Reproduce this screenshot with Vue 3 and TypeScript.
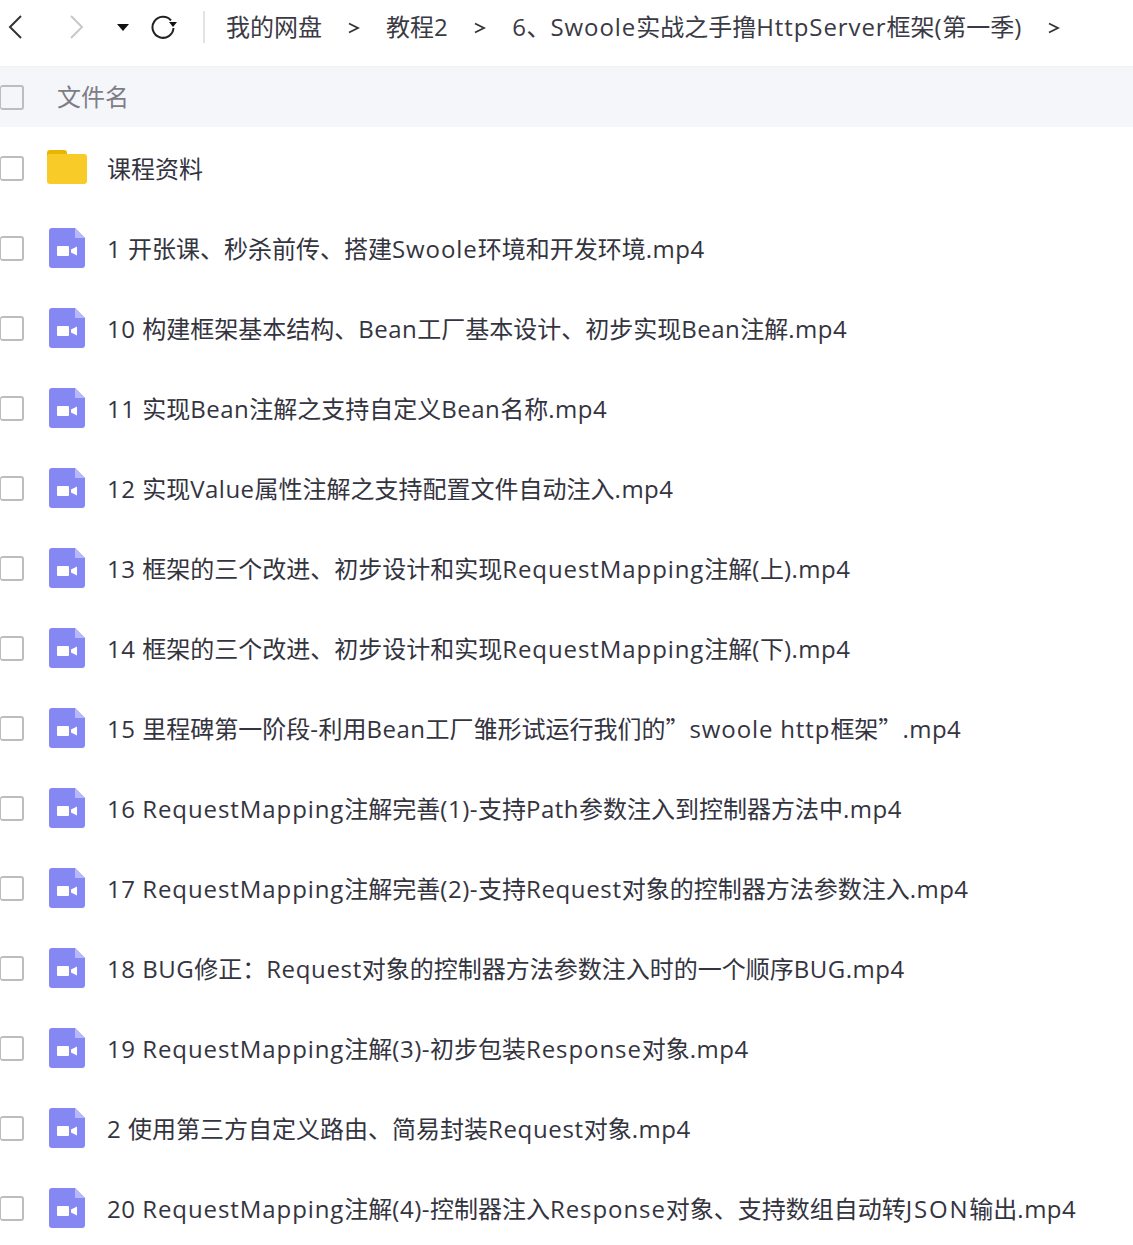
<script setup lang="ts">
interface Run {
  text: string
  kind: 'cjk' | 'base' | 'mid' | 'wide' | 'xwide'
}

const WIDE = /^(Swoole|swoole|RequestMapping|Response|HttpServer|http)$/

function splitRuns(text: string): Run[] {
  const parts = text.match(/Swoole|swoole|RequestMapping|Request|Response|JSON|HttpServer|http|[\x00-\x7f]|[^\x00-\x7f]+/g) ?? []
  const runs: Run[] = []
  for (const part of parts) {
    let kind: Run['kind'] = 'base'
    if (/[^\x00-\x7f]/.test(part)) kind = 'cjk'
    else if (WIDE.test(part)) kind = 'wide'
    else if (part === 'Request') kind = 'mid'
    else if (part === 'JSON') kind = 'xwide'
    const last = runs[runs.length - 1]
    if (last && last.kind === kind) last.text += part
    else runs.push({ text: part, kind })
  }
  return runs
}

const crumbs = ['我的网盘', '教程2', '6、Swoole实战之手撸HttpServer框架(第一季)'].map(splitRuns)
const files: Run[][] = [
  '1 开张课、秒杀前传、搭建Swoole环境和开发环境.mp4',
  '10 构建框架基本结构、Bean工厂基本设计、初步实现Bean注解.mp4',
  '11 实现Bean注解之支持自定义Bean名称.mp4',
  '12 实现Value属性注解之支持配置文件自动注入.mp4',
  '13 框架的三个改进、初步设计和实现RequestMapping注解(上).mp4',
  '14 框架的三个改进、初步设计和实现RequestMapping注解(下).mp4',
  '15 里程碑第一阶段-利用Bean工厂雏形试运行我们的”swoole http框架”.mp4',
  '16 RequestMapping注解完善(1)-支持Path参数注入到控制器方法中.mp4',
  '17 RequestMapping注解完善(2)-支持Request对象的控制器方法参数注入.mp4',
  '18 BUG修正：Request对象的控制器方法参数注入时的一个顺序BUG.mp4',
  '19 RequestMapping注解(3)-初步包装Response对象.mp4',
  '2 使用第三方自定义路由、简易封装Request对象.mp4',
  '20 RequestMapping注解(4)-控制器注入Response对象、支持数组自动转JSON输出.mp4',
].map(splitRuns)
</script>

<template>
  <div class="page">
    <header class="toolbar">
      <div class="nav">
        <svg class="back" width="16" height="26" viewBox="0 0 16 26"><path d="M14 2 3 13l11 11" fill="none" stroke="#333" stroke-width="2"/></svg>
        <svg class="forward" width="16" height="26" viewBox="0 0 16 26"><path d="M2 2l11 11L2 24" fill="none" stroke="#c8c8c8" stroke-width="2"/></svg>
        <svg class="caret" width="12" height="8" viewBox="0 0 12 8"><path d="M0 1h12L6 8z" fill="#111"/></svg>
        <svg class="refresh" width="28" height="26" viewBox="0 0 28 26"><path d="M20 6.500A10.500 10.500 0 1 0 22.500 14" fill="none" stroke="#222" stroke-width="2"/><path d="M18 8h8l-4 5z" fill="#111"/></svg>
        <span class="divider"></span>
      </div>
      <nav class="crumbs">
        <template v-for="(c, i) in crumbs" :key="i">
          <span class="crumb"><span v-for="(r, j) in c" :key="j" :class="r.kind">{{ r.text }}</span></span>
          <svg class="chev" width="12" height="12" viewBox="0 0 12 12"><path d="M1 1.500 10 6l-9 4.500" fill="none" stroke="#333" stroke-width="1.800"/></svg>
        </template>
      </nav>
    </header>
    <div class="table-head">
      <span class="check"></span>
      <span class="head-label cjk">文件名</span>
    </div>
    <ul class="list">
      <li class="row">
        <span class="check"></span>
        <svg class="folder" width="40" height="34" viewBox="0 0 40 34">
          <path d="M0 3a3 3 0 0 1 3-3h14a3 3 0 0 1 3 3v3H0z" fill="#e8b600"/>
          <rect x="0" y="4" width="40" height="30" rx="3" fill="#f9cb28"/>
        </svg>
        <span class="name folder-name cjk">课程资料</span>
      </li>
      <li v-for="(f, i) in files" :key="i" class="row">
        <span class="check"></span>
        <svg class="video" width="36" height="40" viewBox="0 0 36 40">
          <path d="M3 0h23l10 10v27a3 3 0 0 1-3 3H3a3 3 0 0 1-3-3V3a3 3 0 0 1 3-3z" fill="#8587f2"/>
          <path d="M26 0l10 10H26z" fill="#b8b9f8"/>
          <rect x="8" y="18" width="12" height="10" rx="1" fill="#fff"/>
          <path d="M22 21.500 28 18.500v9l-6-3z" fill="#fff"/>
        </svg>
        <span class="name"><span v-for="(r, j) in f" :key="j" :class="r.kind">{{ r.text }}</span></span>
      </li>
    </ul>
  </div>
</template>

<style scoped>
.page {
  width: 1133px;
  height: 1245px;
  overflow: hidden;
  background: #fff;
  font-family: "Open Sans", "Noto Sans CJK SC", sans-serif;
  color: #34343f;
}
.cjk { font-family: "Noto Sans CJK SC", sans-serif; }
.base { letter-spacing: 0.5px; }
.mid { letter-spacing: 0.65px; }
.wide { letter-spacing: 0.92px; }
.xwide { letter-spacing: 1.8px; }
.toolbar {
  display: flex;
  align-items: flex-start;
  height: 66px;
  border-bottom: 1px solid #f0f0f3;
}
.nav { display: flex; align-items: center; height: 54px; }
.back { margin-left: 7px; }
.forward { margin-left: 46px; }
.caret { margin-left: 32px; }
.refresh { margin-left: 22px; }
.divider { width: 2px; height: 32px; background: #e4e4e4; margin-left: 24px; }
.crumbs { display: flex; align-items: center; margin-left: 21px; height: 52px; }
.crumb { font-size: 24px; line-height: 32px; color: #3a3a44; white-space: nowrap; }
.chev { margin: 4px 26px 0 26px; }
.table-head {
  display: flex;
  align-items: center;
  height: 60px;
  background: #f5f6fa;
}
.check {
  flex: none;
  width: 24px;
  height: 25px;
  box-sizing: border-box;
  border: 2px solid #bdbdbd;
  border-left-width: 1px;
  border-radius: 3px;
}
.head-label { margin: 0 0 2px 33px; font-size: 24px; line-height: 32px; color: #7d7d88; }
.list { list-style: none; margin: 1px 0 0; padding: 0; }
.row { display: flex; align-items: center; height: 80px; }
.folder { margin: 0 0 2px 23px; flex: none; }
.video { margin-left: 25px; flex: none; }
.name { margin: 0 0 0 22px; font-size: 24px; line-height: 32px; white-space: nowrap; }
.folder-name { margin-left: 20px; }
</style>
